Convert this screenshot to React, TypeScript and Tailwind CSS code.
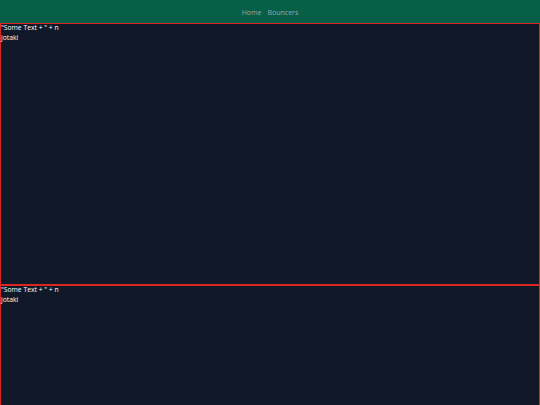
import React from 'react';

const panels = [1, 2];

export default function App() {
  return (
    <div className="h-screen overflow-hidden bg-[#111827] font-['Open_Sans',sans-serif]">
      {/* Top nav */}
      <nav className="h-[23px] pt-[4px] bg-[#065f46] flex items-center justify-center gap-[6px] text-[7px] text-[#9ca3af]">
        <span>Home</span>
        <span>Bouncers</span>
      </nav>

      {panels.map((p) => (
        <div key={p} className="h-[262px] border border-[#dc2626] text-white text-[6.8px] leading-[10px]">
          <div className="-mt-[1px]">"Some Text + " + n</div>
          <div>jotaki</div>
        </div>
      ))}
    </div>
  );
}
